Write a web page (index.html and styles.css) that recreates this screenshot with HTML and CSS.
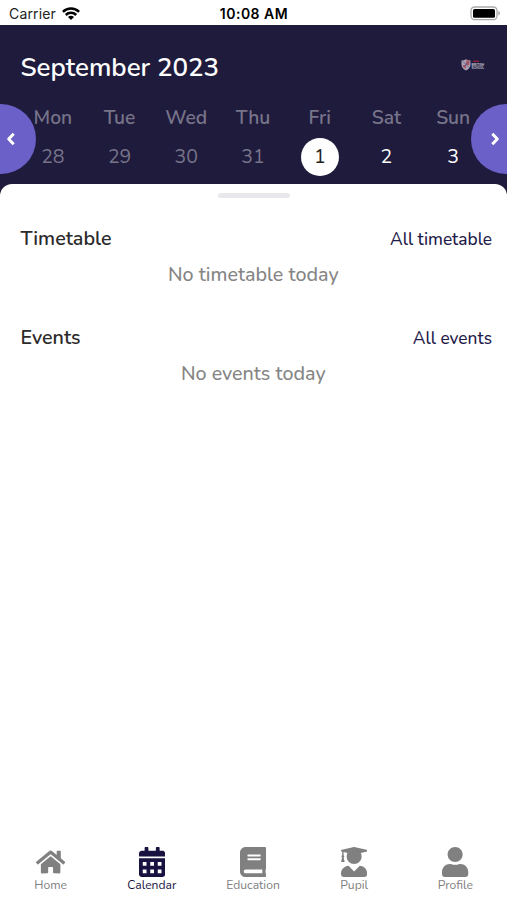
FILE: index.html
```html
<!DOCTYPE html>
<html lang="en">
<head>
<meta charset="utf-8">
<title>Calendar</title>
<link rel="stylesheet" href="styles.css">
</head>
<body>
<div class="app">
  <div class="status">
    <div class="carrier"><span>Carrier</span>
      <svg class="wifi" viewBox="0 0 18 13"><g fill="none" stroke="#000" stroke-width="2.5"><path d="M.9 4.900a11.500 11.500 0 0 1 16.200 0"/><path d="M3.800 8a7.400 7.400 0 0 1 10.400 0"/></g><path d="M9 13l-3-3a4.200 4.200 0 0 1 6 0z"/></svg>
    </div>
    <span class="time">10:08 AM</span>
    <svg class="battery" viewBox="0 0 31 15"><rect x="1" y="1" width="26" height="12.600" rx="3.500" fill="#fff" stroke="#aaa" stroke-width="1.300"/><rect x="3" y="3" width="22" height="8.800" rx="1.500"/><path d="M28.300 5v4.600q1.700-.6 1.700-2.300t-1.700-2.300z" fill="#aaa"/></svg>
  </div>
  <header class="header">
    <div class="title-row">
      <h1>September 2023</h1>
      <svg class="logo" viewBox="0 0 26 14"><path d="M.5 1.500Q3 1.500 5 .3q2 1.200 4.500 1.200V6Q9 9.500 5 11.500 1 9.500.500 6z" fill="#a9a3b5"/><path d="M5 1.500h3.500V6H5zM1.500 6H5v4Q2 8.500 1.500 6z" fill="#b65866"/><path d="M2 2.500l6 6M8 2.500l-6 6" stroke="#514d78" stroke-width=".8"/><path d="M12 2.300h6" stroke="#9e1c3c" stroke-width="1.300"/><g class="logo-text"><text x="10.500" y="6.800" textLength="12.500" lengthAdjust="spacingAndGlyphs">BRITISH</text><text x="10.500" y="10.300" textLength="12.500" lengthAdjust="spacingAndGlyphs">SCHOOL</text></g></svg>
    </div>
    <div class="week">
      <div class="day past"><span class="name">Mon</span><span class="date">28</span></div>
      <div class="day past"><span class="name">Tue</span><span class="date">29</span></div>
      <div class="day past"><span class="name">Wed</span><span class="date">30</span></div>
      <div class="day past"><span class="name">Thu</span><span class="date">31</span></div>
      <div class="day today"><span class="name">Fri</span><span class="date">1</span></div>
      <div class="day"><span class="name">Sat</span><span class="date">2</span></div>
      <div class="day"><span class="name">Sun</span><span class="date">3</span></div>
    </div>
    <button class="nav prev" aria-label="Previous week"><svg viewBox="0 0 10 14"><path d="M7.700 1.800L2.700 7l5 5.200"/></svg></button>
    <button class="nav next" aria-label="Next week"><svg viewBox="0 0 10 14"><path d="M2.300 1.800L7.300 7l-5 5.200"/></svg></button>
  </header>
  <main class="sheet">
    <div class="handle"></div>
    <section>
      <div class="section-head"><h2>Timetable</h2><a>All timetable</a></div>
      <p>No timetable today</p>
    </section>
    <section>
      <div class="section-head"><h2>Events</h2><a>All events</a></div>
      <p>No events today</p>
    </section>
  </main>
  <nav class="tabs">
    <div class="tab"><svg class="home" viewBox="0 0 576 512"><path d="M280.370 148.260L96 300.110V464a16 16 0 0 0 16 16l112.060-.29a16 16 0 0 0 15.920-16V368a16 16 0 0 1 16-16h64a16 16 0 0 1 16 16v95.640a16 16 0 0 0 16 16.050L464 480a16 16 0 0 0 16-16V300L295.670 148.260a12.190 12.190 0 0 0-15.300 0zM571.600 251.470L488 182.560V44.050a12 12 0 0 0-12-12h-56a12 12 0 0 0-12 12v72.610L318.470 43a48 48 0 0 0-61 0L4.340 251.470a12 12 0 0 0-1.600 16.900l25.500 31A12 12 0 0 0 45.150 301l235.220-193.740a12.190 12.190 0 0 1 15.300 0L530.900 301a12 12 0 0 0 16.900-1.600l25.500-31a12 12 0 0 0-1.700-16.930z"/></svg><span>Home</span></div>
    <div class="tab active"><svg viewBox="0 0 448 512"><path fill-rule="evenodd" d="M0 464c0 26.500 21.500 48 48 48h352c26.500 0 48-21.500 48-48V192H0zM64 256h64v64H64zm128 0h64v64h-64zm128 0h64v64h-64zM64 384h64v64H64zm128 0h64v64h-64zm128 0h64v64h-64zM400 64h-48V16c0-8.800-7.200-16-16-16h-32c-8.800 0-16 7.200-16 16v48H160V16c0-8.800-7.200-16-16-16h-32c-8.800 0-16 7.200-16 16v48H48C21.500 64 0 85.500 0 112v48h448v-48c0-26.500-21.500-48-48-48z"/></svg><span>Calendar</span></div>
    <div class="tab"><svg viewBox="0 0 448 512"><path d="M448 360V24c0-13.300-10.700-24-24-24H96C43 0 0 43 0 96v320c0 53 43 96 96 96h328c13.300 0 24-10.700 24-24v-16c0-7.500-3.500-14.300-8.900-18.700-4.200-15.400-4.200-59.300 0-74.700 5.400-4.300 8.900-11.100 8.900-18.600zM128 134c0-3.300 2.700-6 6-6h212c3.300 0 6 2.700 6 6v20c0 3.300-2.700 6-6 6H134c-3.300 0-6-2.700-6-6v-20zm0 64c0-3.300 2.700-6 6-6h212c3.300 0 6 2.700 6 6v20c0 3.300-2.700 6-6 6H134c-3.300 0-6-2.700-6-6v-20zm253.400 250H96c-17.700 0-32-14.300-32-32 0-17.600 14.400-32 32-32h285.400c-1.900 17.100-1.900 46.900 0 64z"/></svg><span>Education</span></div>
    <div class="tab"><svg viewBox="0 0 448 512"><path d="M319.400 320.600L224 416l-95.400-95.400C57.100 323.700 0 382.200 0 454.400v9.600c0 26.500 21.500 48 48 48h352c26.500 0 48-21.500 48-48v-9.600c0-72.200-57.100-130.700-128.600-133.800zM13.600 79.800l6.400 1.500v58.400c-7 4.200-12 11.500-12 20.300 0 8.400 4.600 15.400 11.100 19.700L3.500 242c-1.700 6.900 2.100 14 7.600 14h41.800c5.500 0 9.300-7.100 7.600-14l-15.600-62.300C51.400 175.400 56 168.400 56 160c0-8.800-5-16.100-12-20.300V87.100l66 15.900c-8.600 17.200-14 36.400-14 57 0 70.700 57.300 128 128 128s128-57.300 128-128c0-20.600-5.300-39.800-14-57l96.300-23.200c18.200-4.400 18.200-27.100 0-31.500l-190.400-46c-13-3.100-26.700-3.100-39.700 0L13.600 48.200c-18.100 4.400-18.100 27.200 0 31.600z"/></svg><span>Pupil</span></div>
    <div class="tab"><svg viewBox="0 0 448 512"><path d="M224 256c70.700 0 128-57.300 128-128S294.700 0 224 0 96 57.300 96 128s57.300 128 128 128zm89.600 32h-16.700c-22.200 10.200-46.900 16-72.900 16s-50.600-5.800-72.900-16h-16.700C60.200 288 0 348.200 0 422.400V464c0 26.500 21.500 48 48 48h352c26.500 0 48-21.500 48-48v-41.600c0-74.200-60.200-134.400-134.400-134.400z"/></svg><span>Profile</span></div>
  </nav>
</div>
</body>
</html>
```
FILE: styles.css
```css
* { box-sizing: border-box; }
body { margin: 0; background: #fff; font-family: Nunito, "Noto Sans", sans-serif; }
h1, h2, p { margin: 0; }
.app { display: flex; flex-direction: column; height: 900px; overflow: hidden; }

.status { display: grid; grid-template-columns: 1fr auto 1fr; align-items: center; height: 25px; padding: 2px 6px 0 9px; font-family: Inter, sans-serif; font-size: 14px; line-height: 24px; }
.carrier { display: flex; align-items: center; gap: 6px; color: #222; letter-spacing: .15px; }
.wifi { width: 18px; height: 13px; margin-top: -2px; }
.time { font-weight: 600; font-size: 14px; letter-spacing: .5px; margin-right: 2px; }
.battery { width: 31px; height: 15px; margin-top: -2px; justify-self: end; }

.header { position: relative; flex: none; height: 171px; margin-bottom: -12px; background: #1f1b3c; color: #fff; }
.title-row { display: flex; justify-content: space-between; align-items: flex-start; height: 75px; padding: 25px 20px 0 20.500px; }
h1 { font-size: 25.900px; line-height: 36px; font-weight: 600; }
.logo { width: 26px; height: 14px; margin-top: 9px; overflow: visible; }
.logo-text { font: 700 3.500px "Liberation Sans", sans-serif; fill: #c5c2d2; }
.week { display: flex; margin: 0 20.500px 0 19.500px; }
.day { flex: 1; display: flex; flex-direction: column; align-items: center; }
.name { height: 38px; font-size: 19.300px; line-height: 36px; font-weight: 600; color: #77748a; }
.date { width: 38px; height: 38px; border-radius: 50%; text-align: center; font-size: 19.500px; line-height: 38px; }
.past .date { color: #77748a; }
.today .date { background: #fff; color: #222; }
.nav { position: absolute; top: 79px; width: 70px; height: 70px; padding: 0; border: 0; border-radius: 50%; background: #6a60c8; display: flex; align-items: center; }
.nav svg { width: 10px; height: 14px; fill: none; stroke: #fff; stroke-width: 3; stroke-linejoin: round; stroke-linecap: butt; }
.prev { left: -34px; padding-left: 40px; }
.next { right: -34px; padding-left: 19px; }

.sheet { position: relative; flex: 1; padding: 9px 15px 0 20.500px; border-radius: 12px 12px 0 0; background: #fff; }
.handle { width: 72px; height: 5px; margin: 0 auto 27px; border-radius: 3px; background: #e9e8ed; transform: translateX(-2px); }
section { height: 99px; }
.section-head { display: flex; justify-content: space-between; align-items: center; height: 28px; }
h2 { font-size: 19.700px; line-height: 28px; font-weight: 600; color: #2b2b2b; }
a { font-size: 17.300px; font-weight: 500; color: #1f1b4a; }
p { text-align: center; margin: 8px 6px 0 0; font-size: 19.700px; line-height: 28px; font-weight: 500; color: #858585; }

.tabs { display: flex; height: 54px; margin-right: 1px; }
.tab { flex: 1; display: flex; flex-direction: column; align-items: center; color: #808080; font-size: 12.100px; line-height: 16px; }
.tab svg { height: 30px; fill: currentColor; margin-top: 1px; }
.tab svg.home { height: 26px; margin: 3px 0 2px; }
.active { color: #17123f; }
```
